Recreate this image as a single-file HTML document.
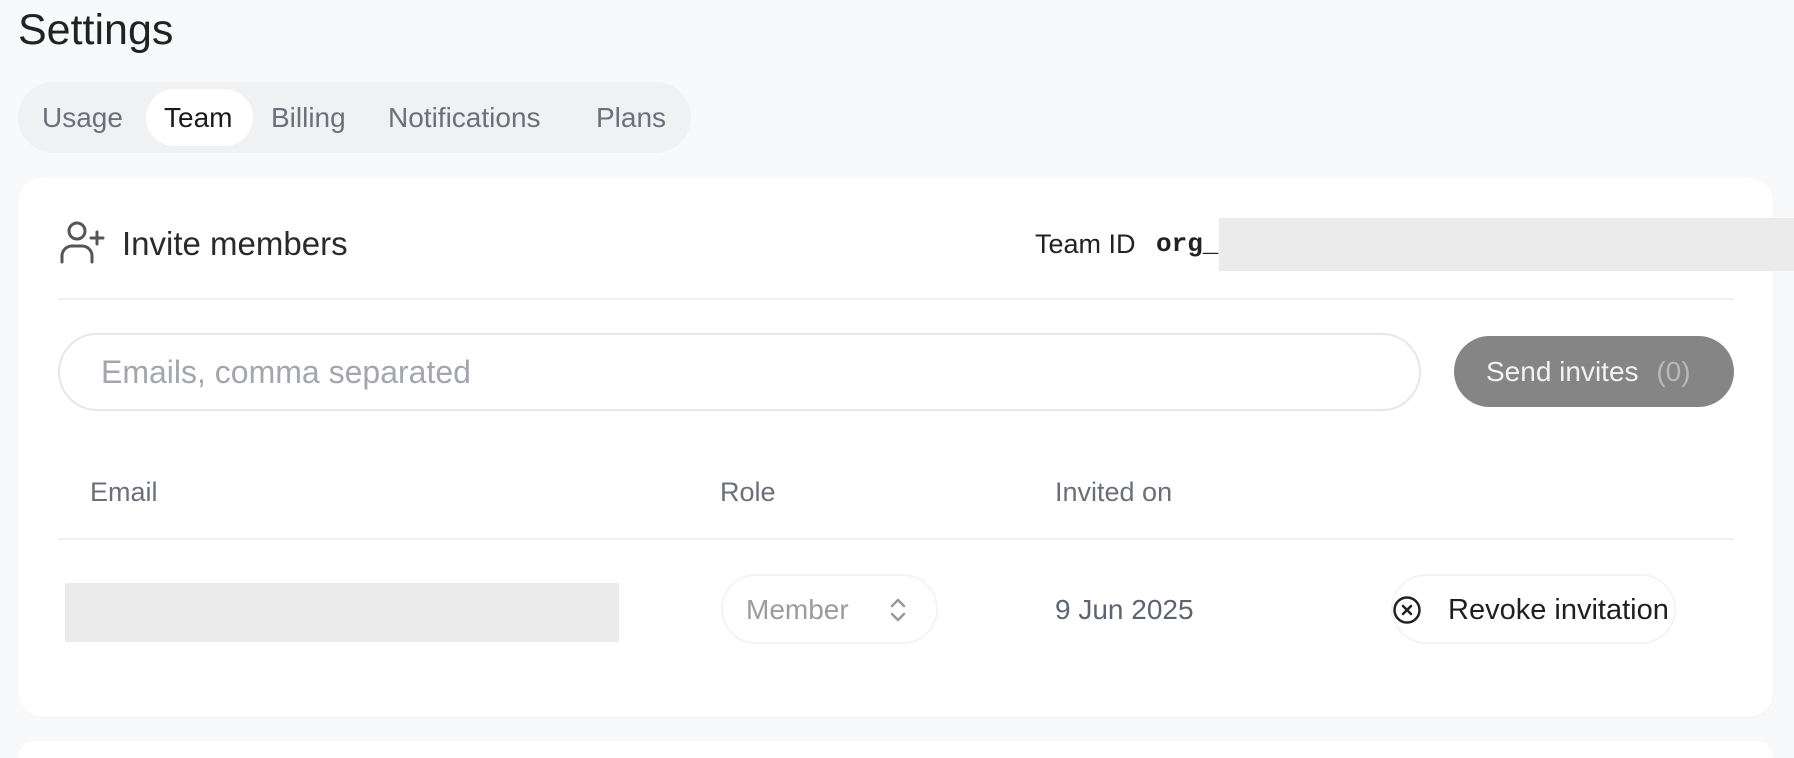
<!DOCTYPE html>
<html style="overflow:hidden;height:758px"><head><meta charset="utf-8"><style>
*{box-sizing:border-box;margin:0;padding:0}
body{width:1794px;height:758px;overflow:hidden;background:#f7f9fa;font-family:"Liberation Sans",sans-serif;position:relative;color:#222}
.a{position:absolute;white-space:nowrap}
.tabs{left:18px;top:82px;width:673px;height:71px;border-radius:36px;background:#eff1f3}
.tab{font-size:28px;color:#6b707a;top:101px;line-height:34px}
.pill{left:146px;top:89px;width:107px;height:57px;border-radius:29px;background:#fff}
.card{left:18px;top:178px;width:1755px;height:539px;border-radius:24px;background:#fff;box-shadow:0 1px 2px rgba(0,0,0,.03)}
.card2{left:18px;top:741px;width:1755px;height:17px;border-radius:24px 24px 0 0;background:#fff}
.th{font-size:27px;color:#6b7078;top:477px;line-height:30px}
</style></head><body>
<div class="a" style="left:18px;top:5px;font-size:43px;line-height:50px;color:#222">Settings</div>
<div class="a tabs"></div>
<div class="a pill"></div>
<div class="a tab" style="left:42px">Usage</div>
<div class="a tab" style="left:164px;color:#1a1a1a">Team</div>
<div class="a tab" style="left:271px">Billing</div>
<div class="a tab" style="left:388px">Notifications</div>
<div class="a tab" style="left:596px">Plans</div>
<div class="a card"></div>
<div class="a card2"></div>
<svg class="a" style="left:58px;top:220px" width="48" height="44" viewBox="0 0 48 44" fill="none" stroke="#555" stroke-width="3" stroke-linecap="round"><circle cx="19" cy="11" r="8"/><path d="M4 42v-6a10 10 0 0 1 10-10h10a10 10 0 0 1 10 10v6"/><path d="M39 12v12M33 18h12"/></svg>
<div class="a" style="left:122px;top:225px;font-size:33px;line-height:38px;color:#2a2a2a">Invite members</div>
<div class="a" style="left:1035px;top:229px;font-size:27px;line-height:30px;color:#222">Team ID</div>
<div class="a" style="left:1156px;top:229px;font-size:26px;line-height:30px;font-family:'Liberation Mono',monospace;font-weight:bold;color:#222">org_</div>
<div class="a" style="left:1219px;top:218px;width:575px;height:53px;background:#ebebeb"></div>
<div class="a" style="left:58px;top:298px;width:1676px;height:2px;background:#f0f1f2"></div>
<div class="a" style="left:58px;top:333px;width:1363px;height:78px;border:2px solid #e6e7e8;border-radius:40px"></div>
<div class="a" style="left:101px;top:354px;font-size:32px;line-height:36px;color:#a3a6ac">Emails, comma separated</div>
<div class="a" style="left:1454px;top:336px;width:280px;height:71px;border-radius:36px;background:#858585"></div>
<div class="a" style="left:1486px;top:356px;font-size:28px;line-height:32px;color:#f2f2f2">Send invites <span style="color:#b8b8b8;margin-left:10px">(0)</span></div>
<div class="a th" style="left:90px">Email</div>
<div class="a th" style="left:720px">Role</div>
<div class="a th" style="left:1055px">Invited on</div>
<div class="a" style="left:58px;top:538px;width:1676px;height:2px;background:#f0f1f2"></div>
<div class="a" style="left:65px;top:583px;width:554px;height:59px;background:#ebebeb"></div>
<div class="a" style="left:721px;top:574px;width:217px;height:70px;border:2px solid #f3f4f5;border-radius:36px"></div>
<div class="a" style="left:746px;top:594px;font-size:28px;line-height:32px;color:#9c9c9c">Member</div>
<svg class="a" style="left:888px;top:596px" width="20" height="28" viewBox="0 0 20 28" fill="none" stroke="#999" stroke-width="2.5" stroke-linecap="round" stroke-linejoin="round"><path d="M4 10l6-6 6 6M4 18l6 6 6-6"/></svg>
<div class="a" style="left:1055px;top:594px;font-size:28px;line-height:32px;color:#5f6570">9 Jun 2025</div>
<div class="a" style="left:1391px;top:574px;width:285px;height:70px;border:2px solid #f3f4f5;border-radius:36px"></div>
<svg class="a" style="left:1392px;top:595px" width="30" height="30" viewBox="0 0 30 30" fill="none" stroke="#222" stroke-width="2.5" stroke-linecap="round"><circle cx="15" cy="15" r="12.5"/><path d="M11 11l8 8M19 11l-8 8"/></svg>
<div class="a" style="left:1448px;top:594px;font-size:29px;line-height:32px;color:#1f1f1f">Revoke invitation</div>
</body></html>
